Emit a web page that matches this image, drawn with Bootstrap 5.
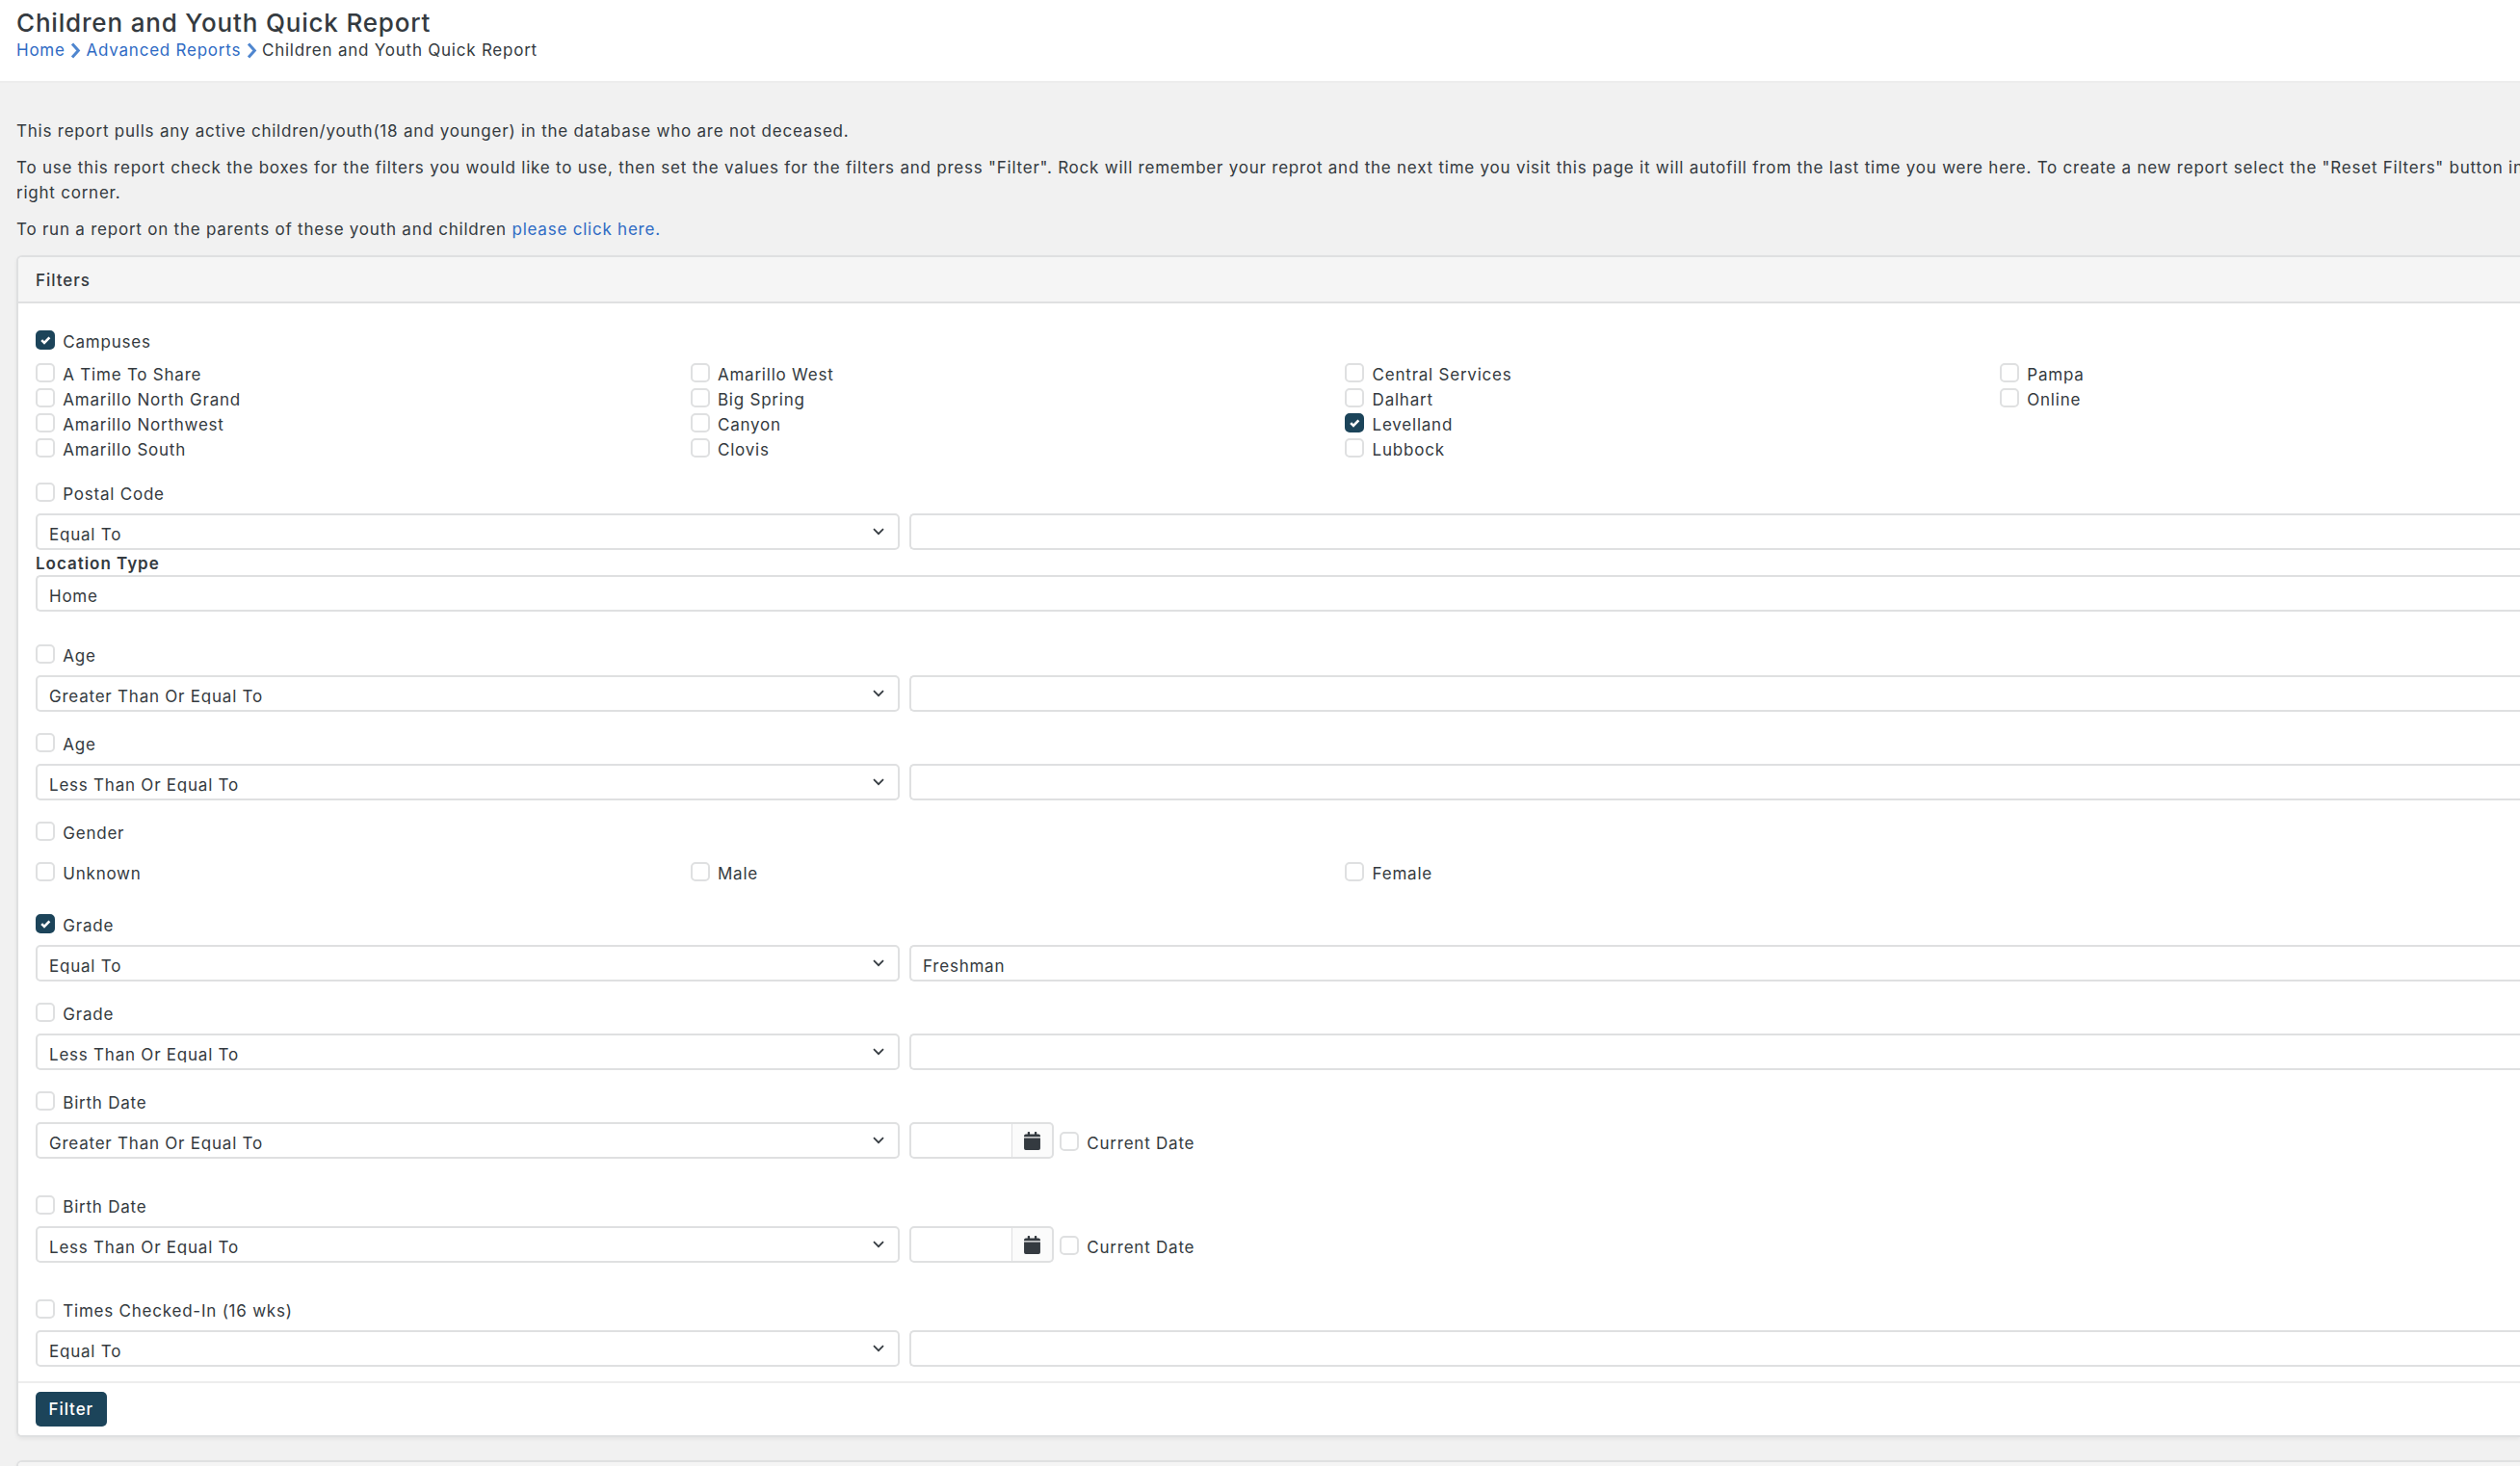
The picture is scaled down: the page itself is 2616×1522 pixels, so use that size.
<!DOCTYPE html>
<html lang="en">
<head>
<meta charset="utf-8">
<title>Children and Youth Quick Report</title>
<link href="https://cdn.jsdelivr.net/npm/bootstrap@5.3.0/dist/css/bootstrap.min.css" rel="stylesheet">
<style>
body { font-family: Inter, "Liberation Sans", sans-serif; font-size: 17px; line-height: 26px; letter-spacing: .772px; color: #343a40; background: #f1f1f1; }
a { color: #2f6bc4; text-decoration: none; }
.page-shell { height: 1522px; overflow: hidden; }
.page-top { height: 86px; padding: 10px 17px 0; background: #fff; border-bottom: 2px solid #ededed; }
.page-title { font-size: 26px; line-height: 28px; font-weight: 500; letter-spacing: .82px; margin: 0 0 1px; }
.crumbs { line-height: 26px; gap: 5.4px; }
.crumbs svg { width: 11px; height: 17px; }
.intro { padding: 37px 0 0 17px; height: 179px; white-space: nowrap; }
.intro p { margin: 0 0 12px; }

/* Panels run on past the right edge of the window */
.panel { margin: 0 0 24px 17px; border: 2px solid #dfe0e1; border-right: 0; border-radius: 6px 0 0 6px; box-shadow: 0 2px 4px rgba(0,0,0,.06); }
.panel > .card-header { height: 48px; padding: 11px 18px 9px; background: #f5f5f5; border-bottom: 2px solid #dfe0e1; font-weight: 500; letter-spacing: .95px; border-radius: 4px 0 0 0; }
.panel > .card-body { padding: 25px 0 0 18px; height: 1119px; }
.panel > .card-footer { padding: 9px 18px; height: 56px; background: #fff; border-top: 2px solid #ededed; border-radius: 0 0 0 4px; }

.opt { height: 26px; min-height: 0; margin: 0; padding: 3px 0 0; display: flex; }
.opt .form-check-input { float: none; flex: none; width: 20px; height: 20px; margin: 0 8.300px 0 0; border: 2px solid #dfe0e1; border-radius: 5px; }
.opt .form-check-input:checked { background-color: #1c445a; border-color: #1c445a; background-size: 20px 20px;
 background-image: url("data:image/svg+xml,%3csvg xmlns='http://www.w3.org/2000/svg' viewBox='0 0 20 20'%3e%3cpath fill='none' stroke='%23fff' stroke-width='2.6' d='M6.2 10.200l2.800 2.800L14.400 7.400'/%3e%3c/svg%3e"); }
.opt .form-check-label { line-height: 26px; margin-top: -1px; white-space: nowrap; }
.check-col { flex: 0 0 679.67px; }
.check-col:last-child { flex: 1 1 0; }

/* Row rhythm of the filter list */
.filter-row { padding-bottom: 19px; }
.filter-row > .opt { height: 35px; }
.campus-row { padding-bottom: 20px; }
.campus-row > .opt { height: 34px; }
.postal-row { padding-bottom: 31px; }
.gender-row { padding-bottom: 28px; }
.gender-row > .opt { height: 42px; }
.date-row { padding-bottom: 35px; }

.fields { gap: 10px; }
.field { height: 38px; border: 2px solid #dfe0e1; border-radius: 5px; background: #fff; padding: 8px 12px 4px; }
.field span { display: block; height: 20px; line-height: 25px; overflow: hidden; white-space: nowrap; }
.open-end { border-right: 0; border-radius: 5px 0 0 5px; }
.picker { flex: 0 0 897px; padding-right: 14.500px; }
.picker svg { width: 12px; height: 8px; margin-top: 4.500px; }
.date-set { width: 150px; }
.date-set .field { border-radius: 5px 0 0 5px; }
.date-set .input-group-text { width: 43px; padding: 0; justify-content: center; background: #fbfbfb; border: 2px solid #dfe0e1; border-left: 0; border-radius: 0 5px 5px 0; }
.date-now { padding: 7px 0 0 6px; }
.field-label { font-weight: 600; line-height: 28px; height: 26px; letter-spacing: .97px; display: block; }
.go { height: 36px; padding: 0 13.500px; background: #1c445a; border: 0; border-radius: 5px; color: #fff; font-size: 17px; font-weight: 500; letter-spacing: .92px; line-height: 36px; }
</style>
<script src="https://cdn.jsdelivr.net/npm/bootstrap@5.3.0/dist/js/bootstrap.bundle.min.js"></script>
</head>
<body>
<svg class="d-none">
  <symbol id="chev" viewBox="0 0 12 8"><path d="M1 1.2 6 6.2 11 1.200" fill="none" stroke="#343a40" stroke-width="1.7"/></symbol>
  <symbol id="crumb" viewBox="0 0 11 17"><path d="M2 1.5 8.3 8.5 2 15.5" fill="none" stroke="#4f86cf" stroke-width="3"/></symbol>
  <symbol id="cal" viewBox="0 0 16 18"><path fill="#343a40" d="M0 5V4a1.700 1.700 0 0 1 1.700-1.700h1.800V.6a.6.6 0 0 1 .6-.6h1a.6.6 0 0 1 .6.6v1.700h4.600V.6a.6.6 0 0 1 .6-.6h1a.6.6 0 0 1 .6.6v1.700h1.800A1.700 1.700 0 0 1 16 4v1zM0 6.200h16v10.100a1.700 1.700 0 0 1-1.700 1.700H1.700A1.700 1.700 0 0 1 0 16.300z"/></symbol>
</svg>
<div class="page-shell">
  <header class="page-top">
    <h1 class="page-title">Children and Youth Quick Report</h1>
    <nav class="crumbs d-flex align-items-center">
      <a href="#">Home</a><svg><use href="#crumb"/></svg><a href="#">Advanced Reports</a><svg><use href="#crumb"/></svg><span>Children and Youth Quick Report</span>
    </nav>
  </header>
  <div class="intro">
    <p>This report pulls any active children/youth(18 and younger) in the database who are not deceased.</p>
    <p>To use this report check the boxes for the filters you would like to use, then set the values for the filters and press "Filter". Rock will remember your reprot and the next time you visit this page it will autofill from the last time you were here. To create a new report select the "Reset Filters" button in<br>right corner.</p>
    <p>To run a report on the parents of these youth and children <a href="#">please click here.</a></p>
  </div>
  <section class="card panel">
    <div class="card-header">Filters</div>
    <div class="card-body" id="filters"></div>
    <div class="card-footer"><button class="btn go d-block">Filter</button></div>
  </section>
  <section class="card panel"><div class="card-header"></div></section>
</div>
<script>
const opt = (t, on) => `<div class="form-check opt"><input class="form-check-input" type="checkbox"${on ? ' checked' : ''}><label class="form-check-label">${t}</label></div>`;
const box = t => `<div class="field open-end flex-fill"><span>${t}</span></div>`;
const date = `<div class="d-flex"><div class="input-group date-set flex-nowrap"><div class="field flex-fill"></div><span class="input-group-text"><svg width="17" height="19"><use href="#cal"/></svg></span></div><div class="date-now">${opt('Current Date')}</div></div>`;
const cols = (lists, on) => `<div class="d-flex">${lists.map(l => `<div class="check-col">${l.map(t => opt(t, t === on)).join('')}</div>`).join('')}</div>`;
const row = (title, on, inner, cls = '') => `<div class="filter-row ${cls}">${opt(title, on)}${inner}</div>`;
const fields = (a, b) => `<div class="d-flex fields"><div class="field picker d-flex justify-content-between"><span>${a}</span><svg><use href="#chev"/></svg></div>${b}</div>`;
document.getElementById('filters').innerHTML =
  row('Campuses', true, cols([['A Time To Share', 'Amarillo North Grand', 'Amarillo Northwest', 'Amarillo South'], ['Amarillo West', 'Big Spring', 'Canyon', 'Clovis'], ['Central Services', 'Dalhart', 'Levelland', 'Lubbock'], ['Pampa', 'Online']], 'Levelland'), 'campus-row') +
  row('Postal Code', false, fields('Equal To', box('')) + '<label class="field-label">Location Type</label><div class="field open-end"><span>Home</span></div>', 'postal-row') +
  row('Age', false, fields('Greater Than Or Equal To', box(''))) +
  row('Age', false, fields('Less Than Or Equal To', box(''))) +
  row('Gender', false, cols([['Unknown'], ['Male'], ['Female'], []]), 'gender-row') +
  row('Grade', true, fields('Equal To', box('Freshman'))) +
  row('Grade', false, fields('Less Than Or Equal To', box(''))) +
  row('Birth Date', false, fields('Greater Than Or Equal To', date), 'date-row') +
  row('Birth Date', false, fields('Less Than Or Equal To', date), 'date-row') +
  row('Times Checked-In (16 wks)', false, fields('Equal To', box('')));
</script>
</body>
</html>
